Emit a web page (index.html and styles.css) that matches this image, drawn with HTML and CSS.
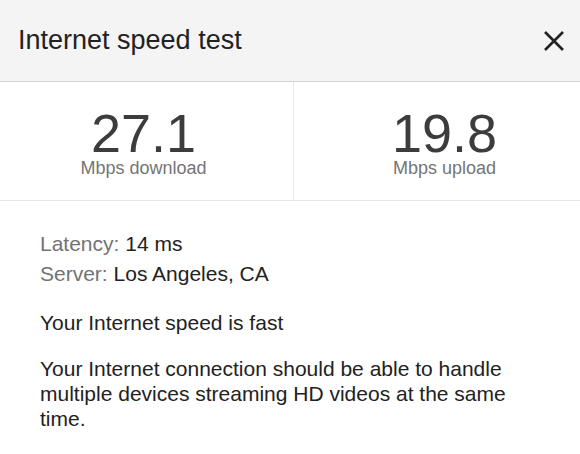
FILE: index.html
```html
<!DOCTYPE html>
<html>
<head>
<meta charset="utf-8">
<link rel="stylesheet" href="styles.css">
</head>
<body>
<div class="card">
  <div class="header">
    <div class="title">Internet speed test</div>
    <svg class="close" width="20" height="20" viewBox="0 0 20 20"><path d="M1 1 L19 19 M19 1 L1 19" stroke="#222" stroke-width="2.6" fill="none"/></svg>
  </div>
  <div class="stats">
    <div class="stat stat-down">
      <div class="num">27.1</div>
      <div class="label">Mbps download</div>
    </div>
    <div class="stat stat-up">
      <div class="num">19.8</div>
      <div class="label">Mbps upload</div>
    </div>
  </div>
  <div class="info">
    <div class="meta"><span class="key">Latency:</span> 14 ms</div>
    <div class="meta"><span class="key">Server:</span> Los Angeles, CA</div>
    <p class="verdict">Your Internet speed is fast</p>
    <p class="desc">Your Internet connection should be able to handle multiple devices streaming HD videos at the same time.</p>
  </div>
</div>
</body>
</html>
```
FILE: styles.css
```css
html, body {
  margin: 0;
  padding: 0;
  background: #fff;
}
body {
  font-family: "Liberation Sans", Arial, sans-serif;
  color: #222;
}
.card {
  width: 580px;
}
.header {
  height: 81px;
  background: #f4f4f4;
  border-bottom: 1px solid #d4d4d4;
  display: flex;
  align-items: center;
  justify-content: space-between;
  padding: 0 16px 0 18px;
}
.title {
  font-size: 27px;
  color: #222;
}
.close {
  display: block;
}
.stats {
  display: grid;
  grid-template-columns: 294px 1fr;
  border-bottom: 1px solid #e8e8e8;
}
.stat {
  display: flex;
  flex-direction: column;
  align-items: center;
  padding: 26px 0 22px;
}
.stat-down {
  border-right: 1px solid #ebebeb;
  padding-right: 6px;
}
.stat-up {
  padding-left: 15px;
}
.num {
  font-size: 54px;
  line-height: 50px;
  color: #3c3c3c;
}
.label {
  font-size: 18px;
  line-height: 20px;
  color: #757575;
}
.info {
  padding: 28px 40px 0 40px;
  font-size: 21px;
}
.meta {
  line-height: 30px;
  color: #222;
}
.key {
  color: #737373;
}
.verdict {
  margin: 19px 0 0;
  line-height: 30px;
}
.desc {
  margin: 17.5px 0 0;
  line-height: 25px;
  width: 480px;
}
```
